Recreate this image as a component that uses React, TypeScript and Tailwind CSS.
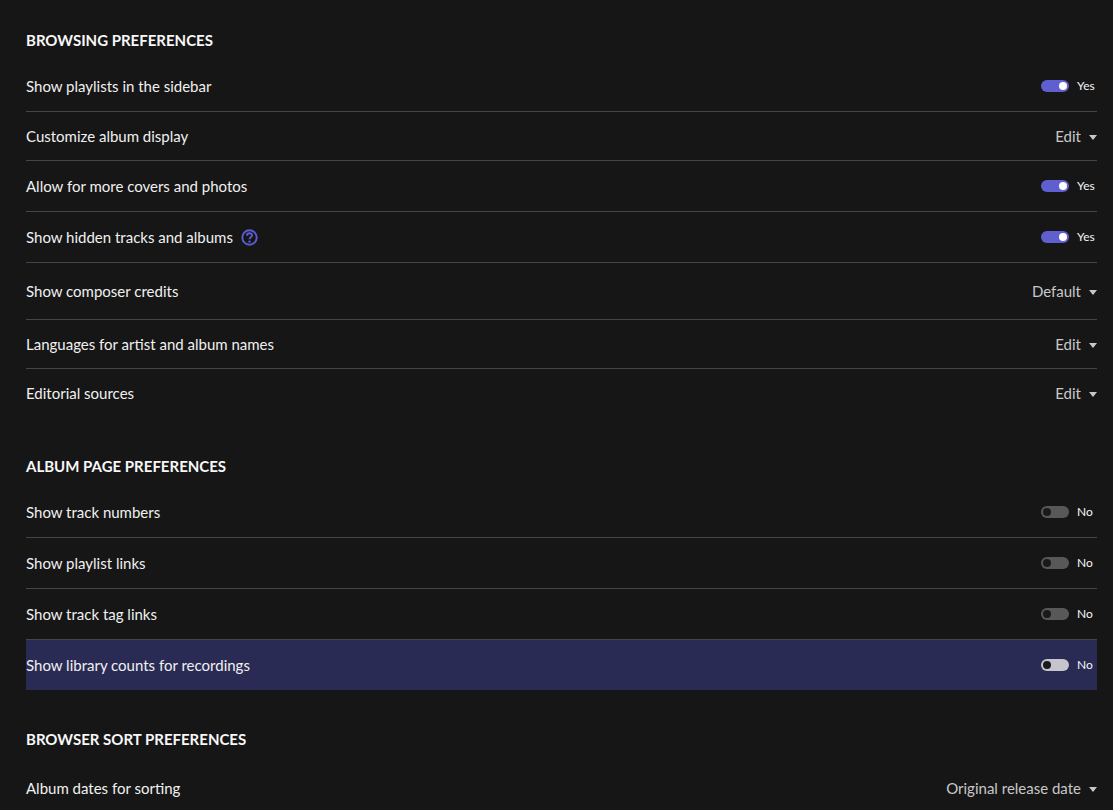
const Toggle = ({ on, hover }: { on: boolean; hover?: boolean }) => (
  <div className="flex items-center">
    <div
      className={`flex h-[12px] w-[28px] items-center rounded-full px-[2px] ${on ? "justify-end bg-[#5f5fd0]" : hover ? "justify-start bg-[#c6c4cc]" : "justify-start bg-[#585858]"}`}
    >
      <div className={`h-[8px] w-[8px] rounded-full ${on ? "bg-white" : "bg-[#1a1a1a]"}`} />
    </div>
    <span className="ml-[8px] w-[20px] text-[12px] leading-none text-[#f6f6f6]">{on ? "Yes" : "No"}</span>
  </div>
);

const Select = ({ value }: { value: string }) => (
  <div className="flex items-center text-[15px] text-[#c8c8c8]">
    <span>{value}</span>
    <svg className="ml-[8px] mt-[2px]" width="8" height="5" viewBox="0 0 8 5">
      <path d="M0 0H8L4 5Z" fill="#c8c8c8" />
    </svg>
  </div>
);

const Help = () => (
  <svg className="ml-[8px]" width="17" height="17" viewBox="0 0 17 17" fill="none">
    <circle cx="8.5" cy="8.5" r="7.2" stroke="#5c5cd2" strokeWidth="1.9" />
    <path d="M6 6.8C6 5.3 7.1 4.3 8.5 4.3C9.9 4.3 11 5.3 11 6.5C11 8.3 8.5 8.2 8.5 10.2" stroke="#5c5cd2" strokeWidth="1.9" />
    <circle cx="8.5" cy="12.6" r="1.2" fill="#5c5cd2" />
  </svg>
);

const Row = ({ label, h, border = true, hover, help, children }: { label: string; h: string; border?: boolean; hover?: boolean; help?: boolean; children: React.ReactNode }) => (
  <div className={`flex items-center justify-between ${h} ${border ? "border-b border-[#454545]" : ""} ${hover ? "bg-[#2a2b55]" : ""}`}>
    <div className="flex items-center text-[15px] text-[#f0f0f0]">
      <span>{label}</span>
      {help && <Help />}
    </div>
    {children}
  </div>
);

const Heading = ({ children, top }: { children: string; top: string }) => (
  <h2 className={`${top} mb-[9px] h-[24px] text-[15px] font-bold leading-[24px] text-[#f8f8f8]`}>{children}</h2>
);

export default function App() {
  return (
    <div className="h-[810px] overflow-hidden bg-[#161616] pl-[26px] pr-[16px] font-['Lato',sans-serif]">
      <Heading top="pt-0 mt-[28px]">BROWSING PREFERENCES</Heading>
      <Row label="Show playlists in the sidebar" h="h-[51px]"><Toggle on /></Row>
      <Row label="Customize album display" h="h-[49px]"><Select value="Edit" /></Row>
      <Row label="Allow for more covers and photos" h="h-[51px]"><Toggle on /></Row>
      <Row label="Show hidden tracks and albums" h="h-[51px]" help><Toggle on /></Row>
      <Row label="Show composer credits" h="h-[57px]"><Select value="Default" /></Row>
      <Row label="Languages for artist and album names" h="h-[49px]"><Select value="Edit" /></Row>
      <Row label="Editorial sources" h="h-[48px]" border={false}><Select value="Edit" /></Row>

      <Heading top="mt-[37px]">ALBUM PAGE PREFERENCES</Heading>
      <Row label="Show track numbers" h="h-[51px]"><Toggle on={false} /></Row>
      <Row label="Show playlist links" h="h-[51px]"><Toggle on={false} /></Row>
      <Row label="Show track tag links" h="h-[51px]"><Toggle on={false} /></Row>
      <Row label="Show library counts for recordings" h="h-[50px]" border={false} hover><Toggle on={false} hover /></Row>

      <Heading top="mt-[37px]">BROWSER SORT PREFERENCES</Heading>
      <Row label="Album dates for sorting" h="h-[56px]" border={false}><Select value="Original release date" /></Row>
    </div>
  );
}
